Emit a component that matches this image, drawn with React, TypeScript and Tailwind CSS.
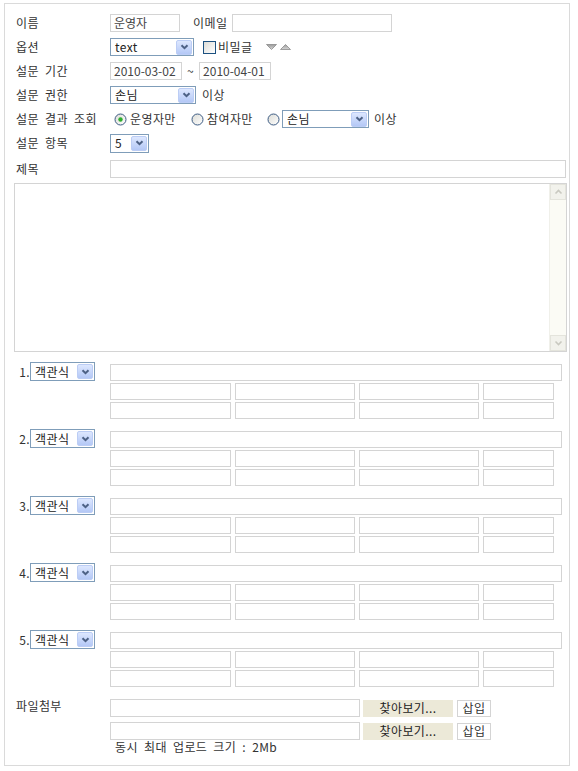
import React from 'react';

const Chevron = () => (
    <svg width="9" height="6" viewBox="0 0 9 6">
        <path d="M1.5 1.2 L4.5 4.2 L7.5 1.2" fill="none" stroke="#4d6185" strokeWidth="2" />
    </svg>
);

// XP style combo box, drawn so the arrow matches the picture
const Sel = ({ value, className }: { value: string; className: string }) => (
    <div className={`flex items-center justify-between border border-[#7f9db9] bg-white pl-[4px] pr-px ${className}`}>
        <span className="leading-none text-[#222]">{value}</span>
        <span className="flex h-[15px] w-[16px] items-center justify-center rounded-[2px] border border-[#bccdf5] bg-gradient-to-b from-[#dde7fe] to-[#b4c8f6]">
            <Chevron />
        </span>
    </div>
);

const Input = ({ className, value }: { className: string; value?: string }) => (
    <div className={`flex items-center overflow-hidden whitespace-nowrap border border-[#d4d4d4] bg-white pl-[3px] leading-none tracking-normal text-[#444] ${className}`}>
        {value}
    </div>
);

const Radio = ({ checked }: { checked?: boolean }) => (
    <svg width="13" height="13" viewBox="0 0 13 13" className="shrink-0">
        <defs>
            <linearGradient id="rg" x1="0" y1="0" x2="1" y2="1">
                <stop offset="0" stopColor="#dcdcd6" />
                <stop offset="1" stopColor="#ffffff" />
            </linearGradient>
        </defs>
        <circle cx="6.5" cy="6.5" r="5.5" fill="url(#rg)" stroke="#3d5c84" strokeWidth="1" />
        {checked && <circle cx="6.5" cy="6.5" r="2.2" fill="#2fae2f" />}
    </svg>
);

const Label = ({ children }: { children: React.ReactNode }) => (
    <div className="w-[94px] shrink-0 text-[#333]">{children}</div>
);

const Row = ({ children, className = '' }: { children: React.ReactNode; className?: string }) => (
    <div className={`flex h-[24px] items-center ${className}`}>{children}</div>
);

const Question = ({ n }: { n: number }) => (
    <div className="flex items-start">
        <div className="flex w-[94px] shrink-0 items-center">
            <span className="w-[14px] text-right leading-none text-[#333]">{n}.</span>
            <Sel value="객관식" className="h-[19px] w-[65px]" />
        </div>
        <div className="mt-[2px] flex flex-col gap-[2px]">
            <Input className="h-[17px] w-[452px]" />
            {[0, 1].map((r) => (
                <div key={r} className="flex gap-[4px]">
                    <Input className="h-[17px] w-[121px]" />
                    <Input className="h-[17px] w-[120px]" />
                    <Input className="h-[17px] w-[120px]" />
                    <Input className="h-[17px] w-[71px]" />
                </div>
            ))}
        </div>
    </div>
);

export default function App() {
    return (
        <div className="h-[771px] w-[578px] bg-white pt-[3px] pl-[4px] font-['Noto_Sans_CJK_KR',sans-serif] text-[12px] tracking-[0.4px] [word-spacing:3px]">
            <div className="h-[763px] w-[566px] border border-[#dadada] pt-[7px] pl-[11px]">
                <Row>
                    <Label>이름</Label>
                    <Input className="h-[18px] w-[70px]" value="운영자" />
                    <span className="ml-[13px] w-[39px] text-[#333]">이메일</span>
                    <Input className="h-[18px] w-[160px]" />
                </Row>
                <Row>
                    <Label>옵션</Label>
                    <Sel value="text" className="h-[18px] w-[84px]" />
                    <span className="ml-[9px] h-[13px] w-[13px] border border-[#1c5180] bg-gradient-to-br from-[#dcdcd7] to-white" />
                    <span className="ml-[2px] w-[48px] text-[#333]">비밀글</span>
                    <svg width="26" height="8" viewBox="0 0 26 8">
                        <defs>
                            <linearGradient id="tg" x1="0" y1="0" x2="0" y2="1">
                                <stop offset="0" stopColor="#9a9a9a" />
                                <stop offset="1" stopColor="#d8d8d8" />
                            </linearGradient>
                        </defs>
                        <path d="M0.5 1.5 H10.5 L5.5 6.5 Z" fill="url(#tg)" stroke="#8a8a8a" strokeWidth="0.8" />
                        <path d="M14.5 6.5 H24.5 L19.5 1.5 Z" fill="url(#tg)" stroke="#8a8a8a" strokeWidth="0.8" />
                    </svg>
                </Row>
                <Row>
                    <Label>설문 기간</Label>
                    <Input className="h-[18px] w-[72px] border-[#7f9db9] pl-[2px] text-[#222]" value="2010-03-02" />
                    <span className="mx-[5px] text-[#333]">~</span>
                    <Input className="h-[18px] w-[72px] border-[#7f9db9] pl-[2px] text-[#222]" value="2010-04-01" />
                </Row>
                <Row>
                    <Label>설문 권한</Label>
                    <Sel value="손님" className="h-[18px] w-[86px]" />
                    <span className="ml-[6px] text-[#333]">이상</span>
                </Row>
                <Row>
                    <Label>설문 결과 조회</Label>
                    <span className="ml-[4px] flex w-[77px] items-center gap-[3px] text-[#333]">
                        <Radio checked />
                        운영자만
                    </span>
                    <span className="flex w-[76px] items-center gap-[3px] text-[#333]">
                        <Radio />
                        참여자만
                    </span>
                    <span className="flex items-center">
                        <Radio />
                    </span>
                    <Sel value="손님" className="ml-[2px] h-[18px] w-[87px]" />
                    <span className="ml-[5px] text-[#333]">이상</span>
                </Row>
                <Row>
                    <Label>설문 항목</Label>
                    <Sel value="5" className="h-[19px] w-[39px]" />
                </Row>
                <Row className="mt-[2px]">
                    <Label>제목</Label>
                    <Input className="h-[18px] w-[456px]" />
                </Row>

                <div className="mt-[2px] -ml-[2px] flex h-[169px] w-[553px] justify-end border border-[#d4d4d4] bg-white">
                    <div className="flex w-[17px] flex-col justify-between border-l border-[#f0f0ea] bg-[#fbfbf5]">
                        <div className="flex h-[16px] items-center justify-center border border-[#e4e4dc] bg-[#f2f2ec]">
                            <svg width="9" height="6" viewBox="0 0 9 6">
                                <path d="M1.5 4.5 L4.5 1.5 L7.5 4.5" fill="none" stroke="#c9c9c0" strokeWidth="1.6" />
                            </svg>
                        </div>
                        <div className="flex h-[16px] items-center justify-center border border-[#e4e4dc] bg-[#f2f2ec]">
                            <svg width="9" height="6" viewBox="0 0 9 6">
                                <path d="M1.5 1.5 L4.5 4.5 L7.5 1.5" fill="none" stroke="#c9c9c0" strokeWidth="1.6" />
                            </svg>
                        </div>
                    </div>
                </div>

                <div className="mt-[10px] flex flex-col gap-[10px]">
                    {[1, 2, 3, 4, 5].map((n) => (
                        <Question key={n} n={n} />
                    ))}
                </div>

                <div className="mt-[12px] flex items-start">
                    <div className="w-[94px] shrink-0 leading-[14px] text-[#333]">파일첨부</div>
                    <div className="flex flex-col gap-[5px]">
                        {[0, 1].map((r) => (
                            <div key={r} className="flex items-center">
                                <Input className="h-[18px] w-[250px]" />
                                <span className="ml-[3px] flex h-[17px] w-[90px] items-center justify-center bg-[#ece9d8] leading-none text-[#222]">
                                    찾아보기...
                                </span>
                                <span className="ml-[4px] flex h-[17px] w-[34px] items-center justify-center border border-[#d4d4d4] bg-white leading-none text-[#333]">
                                    삽입
                                </span>
                            </div>
                        ))}
                        <div className="-mt-[4px] pl-[5px] leading-[12px] text-[#333]">동시 최대 업로드 크기 : 2Mb</div>
                    </div>
                </div>
            </div>
        </div>
    );
}
